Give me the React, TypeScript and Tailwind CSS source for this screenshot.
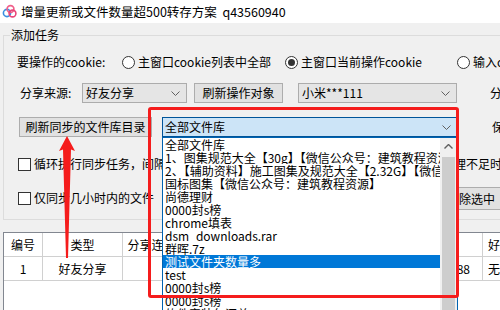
import type { ReactNode } from 'react';

const libraries = [
  '全部文件库',
  '1、图集规范大全【30g】【微信公众号：建筑教程资源】',
  '2、【辅助资料】施工图集及规范大全【2.32G】【微信公众号：建筑教程资源】',
  '国标图集【微信公众号：建筑教程资源】',
  '尚德理财',
  '0000封s榜',
  'chrome填表',
  'dsm_downloads.rar',
  '群晖.7z',
  '测试文件夹数量多',
  'test',
  '0000封s榜',
  '0000封s榜',
  '软件安装包汇总',
];

const Chevron = () => (
  <svg width="9" height="5" viewBox="0 0 9 5" className="shrink-0">
    <polyline points="0.5,0.5 4.5,4.5 8.5,0.5" fill="none" stroke="#606060" strokeWidth="1" />
  </svg>
);

const Radio = ({ checked, children }: { checked?: boolean; children: ReactNode }) => (
  <span className="flex items-center gap-[3px] whitespace-nowrap">
    <span className="flex h-[13px] w-[13px] shrink-0 items-center justify-center rounded-full border border-[#333] bg-white">
      {checked && <span className="h-[7px] w-[7px] rounded-full bg-[#333]" />}
    </span>
    {children}
  </span>
);

const Checkbox = ({ children }: { children: ReactNode }) => (
  <span className="flex items-center gap-[3px] whitespace-nowrap">
    <span className="h-[13px] w-[13px] shrink-0 border border-[#333] bg-white" />
    {children}
  </span>
);

const Button = ({ children, className }: { children: ReactNode; className?: string }) => (
  <div
    className={`flex h-[20px] items-center justify-center whitespace-nowrap border border-[#adadad] bg-[#e1e1e1] ${className ?? ''}`}
  >
    {children}
  </div>
);

const Combo = ({ value, className }: { value: string; className?: string }) => (
  <div
    className={`flex h-[20px] items-center justify-between border border-[#acacac] bg-[#e5e5e5] pl-[3px] pr-[6px] ${className ?? ''}`}
  >
    <span className="whitespace-nowrap">{value}</span>
    <Chevron />
  </div>
);

const AppIcon = () => (
  <svg width="15" height="15" viewBox="0 0 15 15" className="shrink-0">
    <circle cx="5" cy="9" r="3.6" fill="none" stroke="#3b8fe0" strokeWidth="1.6" />
    <circle cx="8.5" cy="5" r="3.4" fill="none" stroke="#f0608a" strokeWidth="1.6" />
    <circle cx="10.5" cy="9.5" r="3.4" fill="none" stroke="#e8457a" strokeWidth="1.6" />
  </svg>
);

export default function App() {
  return (
    <div className="relative h-[310px] w-[500px] overflow-hidden bg-[#f0f0f0] font-['Noto_Sans_CJK_SC',sans-serif] text-[12px] leading-[16px] text-black">
      {/* title bar */}
      <div className="flex h-[23px] items-center gap-[4px] bg-white pl-[2px] text-[12.5px]">
        <AppIcon />
        <span className="whitespace-nowrap">增量更新或文件数量超500转存方案&nbsp;&nbsp;q43560940</span>
      </div>

      <fieldset className="ml-[3px] mt-[4px] w-[520px] border border-[#dcdcdc] pb-[9px]">
        <legend className="ml-[6px] px-[1px] leading-[16px]">添加任务</legend>

        <div className="mt-[10px] flex h-[18px] items-center pl-[13px]">
          <span className="w-[105px] whitespace-nowrap">要操作的cookie:</span>
          <span className="w-[163px]">
            <Radio>主窗口cookie列表中全部</Radio>
          </span>
          <span className="w-[172px]">
            <Radio checked>主窗口当前操作cookie</Radio>
          </span>
          <Radio>输入cookie</Radio>
        </div>

        <div className="mt-[12px] flex h-[20px] items-center pl-[16px]">
          <span className="w-[62px] whitespace-nowrap">分享来源:</span>
          <Combo value="好友分享" className="w-[105px]" />
          <Button className="ml-[7px] w-[89px]">刷新操作对象</Button>
          <Combo value="小米***111" className="ml-[15px] w-[159px]" />
          <span className="ml-[33px] whitespace-nowrap">分享</span>
        </div>

        <div className="mt-[14px] flex h-[20px] items-center pl-[15px]">
          <Button className="w-[133px]">刷新同步的文件库目录</Button>
          <div className="relative z-10 ml-[10px] w-[296px]">
            <div className="flex h-[20px] items-center justify-between border border-[#005499] bg-[#cce4f7] pl-[2px] pr-[6px]">
              <span>全部文件库</span>
              <Chevron />
            </div>
            {/* open dropdown list */}
            <div className="absolute left-0 top-[20px] flex h-[200px] w-[296px] border border-[#0063b1] bg-white leading-[13px]">
              <div className="min-w-0 flex-1 overflow-hidden">
                {libraries.map((name, i) => (
                  <div
                    key={i}
                    className={`h-[13px] overflow-hidden whitespace-nowrap pl-[2px] ${
                      i === 9 ? 'bg-[#0078d7] text-white' : ''
                    }`}
                  >
                    {name}
                  </div>
                ))}
              </div>
              <div className="flex w-[17px] flex-col items-center bg-[#f0f0f0] pt-[6px]">
                <svg width="9" height="5" viewBox="0 0 9 5">
                  <polyline points="0.5,4.5 4.5,0.5 8.5,4.5" fill="none" stroke="#606060" strokeWidth="1.4" />
                </svg>
                <div className="mt-[8px] w-[13px] flex-1 bg-[#cdcdcd]" />
              </div>
            </div>
          </div>
          <span className="ml-[34px] whitespace-nowrap">保存</span>
        </div>

        <div className="mt-[19px] flex h-[16px] items-center pl-[14px]">
          <span className="w-[436px]">
            <Checkbox>循环执行同步任务，间隔</Checkbox>
          </span>
          <span className="whitespace-nowrap">理不足时</span>
        </div>

        <div className="mt-[15px] flex h-[23px] items-start pl-[14px]">
          <span className="mt-[3px] w-[412px]">
            <Checkbox>仅同步几小时内的文件</Checkbox>
          </span>
          <div className="flex h-[23px] w-[90px] items-center border border-[#adadad] bg-[#e1e1e1] pl-[16px]">
            删除选中
          </div>
        </div>
      </fieldset>

      {/* task table */}
      <div className="ml-[3px] mt-[12px] h-[80px] w-[520px] border-l border-t border-[#828790] bg-white">
        <div className="flex h-[24px] items-center border-b border-[#d0d0d0]">
          <div className="flex h-full w-[39px] items-center justify-center border-r border-[#d0d0d0]">编号</div>
          <div className="flex h-full w-[80px] items-center justify-center border-r border-[#d0d0d0]">类型</div>
          <div className="flex h-full w-[58px] items-center justify-center border-r border-[#d0d0d0]">分享连接</div>
          <div className="flex h-full w-[230px] items-center justify-center border-r border-[#d0d0d0]">文件库</div>
          <div className="flex h-full w-[72px] items-center justify-center border-r border-[#d0d0d0]">数量</div>
          <div className="flex h-full items-center pl-[5px]">好友</div>
        </div>
        <div className="flex h-[24px] items-center border-b border-[#d0d0d0]">
          <div className="flex h-full w-[39px] items-center justify-center border-r border-[#d0d0d0]">1</div>
          <div className="flex h-full w-[80px] items-center justify-center border-r border-[#d0d0d0]">好友分享</div>
          <div className="h-full w-[58px] border-r border-[#d0d0d0]" />
          <div className="h-full w-[230px] border-r border-[#d0d0d0]" />
          <div className="flex h-full w-[72px] items-center justify-end border-r border-[#d0d0d0] pr-[12px]">588</div>
          <div className="flex h-full items-center pl-[5px]">无</div>
        </div>
      </div>

      {/* red annotation */}
      <div className="absolute left-[148px] top-[107px] z-20 h-[191px] w-[311px] rounded-[3px] border-[3px] border-[#f51c1c]" />
      <svg className="absolute left-[55px] top-[134px] z-20" width="25" height="124" viewBox="0 0 25 124">
        <polygon points="12,2 20,17 16,15.5 13,124 11,124 8,15.5 4,17" fill="#f51c1c" />
      </svg>
    </div>
  );
}
